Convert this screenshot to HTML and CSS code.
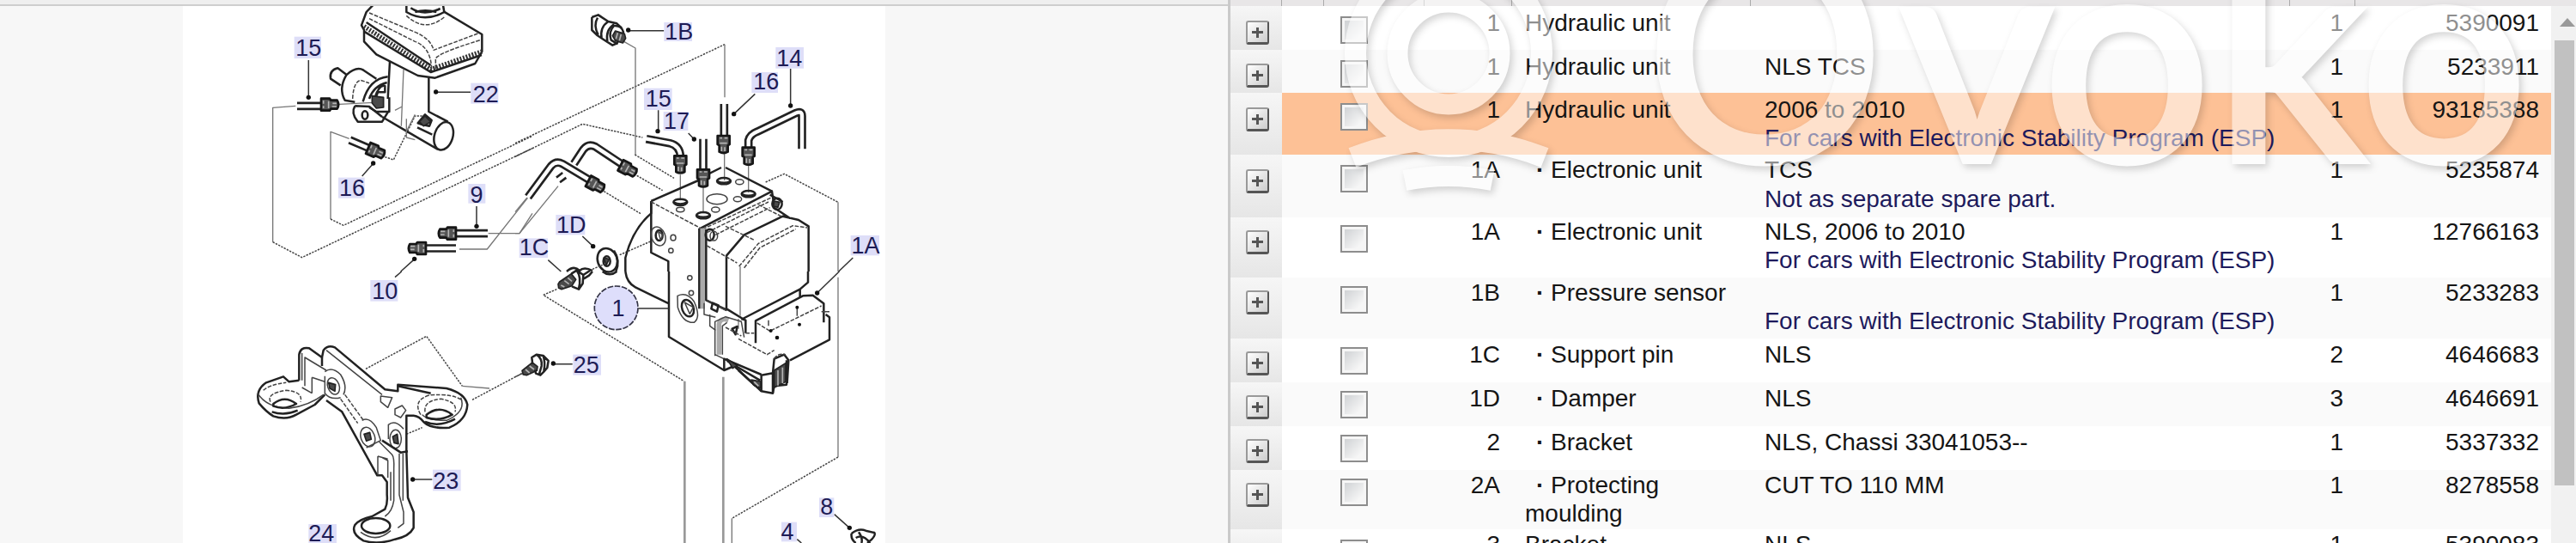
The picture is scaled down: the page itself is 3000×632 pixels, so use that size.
FILE: index.html
```html
<!DOCTYPE html>
<html lang="en">
<head>
<meta charset="utf-8">
<title>Parts catalogue</title>
<link rel="stylesheet" href="styles.css">
</head>
<body>
<main class="catalogue">
<section class="diagram">
<div class="toolbar-edge"></div>
<svg class="drawing" viewBox="213 7 818 625" width="818" height="625">
<defs>
<g id="nut"><path class="nut" d="M-21 -28H21V2L15 6V28Q0 37 -15 28V6L-21 2Z"/><path class="glint" d="M-13 -20H-5M3 -20H14M-13 -2H12M-7 10V26M4 12V26"/></g>
<g id="hole"><ellipse class="ink" rx="24" ry="11"/><path class="blk" d="M-22 0Q0 10 22 0L12 10H-12Z"/></g>
</defs>

<!-- upper left: master cylinder, reservoir and pipes -->
<g transform="translate(200 0) scale(.33333)">
<path class="thin" d="M433 370L353 376V845M620 484L555 460V765M585 364L705 358"/>
<path class="dots" d="M353 845L455 899L1260 518M555 765L600 787L1260 475M745 548L775 558L850 405H880"/>
<path class="thin" d="M1104 815H1215L1260 745M1005 870H1102L1260 670"/>
<path class="ink" d="M703 18L680 42L663 88L672 105V145L715 190L860 264L920 272L1060 222L1084 180V120L950 40"/>
<path class="ink" d="M820 18V42Q885 80 952 42L948 18M835 28Q880 58 938 30M850 42Q885 32 925 42"/>
<path class="dash" d="M820 55Q885 115 952 60M690 45L850 112Q905 135 915 175L1075 115M690 65L850 145Q905 165 908 240M922 240V205Q930 185 1078 140"/>
<path class="ribs" d="M672 92L905 242L1083 180"/>
<path class="ink" d="M680 78L905 228M672 110L905 252L1083 192"/>
<path class="ink" d="M762 215L755 345M898 272V392M735 408L815 455L930 522M898 390L965 425"/>
<path class="thin" d="M810 242L802 440M822 455L850 400M780 385L805 372M820 415V480L850 488"/>
<ellipse class="ink" cx="950" cy="475" rx="32" ry="50" transform="rotate(17 950 475)"/>
<path class="ink" d="M860 430L885 400L908 420L900 440L875 435ZM858 445L910 470"/><path class="blk" d="M865 425L885 405L905 425L880 440Z"/>
<path class="ink" d="M610 260L580 238Q550 245 555 275L590 298M610 262Q645 230 670 245L715 275M610 262Q582 310 605 350L640 356M755 268Q690 275 668 355"/>
<path class="dash" d="M632 345Q635 285 660 280L690 290"/>
<path class="ink" d="M752 288Q705 300 690 345M710 340Q725 295 745 300V322H720L710 350M760 340V390H715L690 375"/>
<path class="blk" d="M700 335L740 340V375L715 378L700 360Z"/>
<path class="ink" d="M640 370Q625 395 650 425L735 425L755 392M640 370L690 372L735 408"/><ellipse class="ink" cx="675" cy="402" rx="10" ry="14"/>
<path class="tube" d="M438 370H535M622 489L690 518M1104 815H975M993 867H870"/><path class="tubein" d="M436 370H535M620 488L690 518M1106 815H975M995 867H870"/>
<use href="#nut" transform="translate(550 365) rotate(-90)"/><use href="#nut" transform="translate(712 528) rotate(-67)"/><use href="#nut" transform="translate(965 815) rotate(90)"/><use href="#nut" transform="translate(860 867) rotate(90)"/>
<path class="lead" d="M478 210V340M1045 322H925M665 615L703 572M1065 720V788M800 948L848 905"/>
<g class="dot"><circle cx="478" cy="340" r="8"/><circle cx="923" cy="321" r="8"/><circle cx="704" cy="570" r="8"/><circle cx="1065" cy="790" r="8"/><circle cx="848" cy="904" r="8"/></g>
<g class="tag"><rect x="428" y="128" width="94" height="76"/><rect x="1045" y="290" width="96" height="72"/><rect x="582" y="620" width="92" height="72"/><rect x="1036" y="642" width="60" height="68"/></g>
<g class="num"><text x="478" y="195">15</text><text x="1097" y="356">22</text><text x="630" y="685">16</text><text x="1065" y="708">9</text></g>
</g>

<!-- upper right: hydraulic unit top with its connections -->
<g transform="translate(600 0) scale(.33333)">
<path class="dots" d="M0 500L732 155M0 547L235 433L445 480M418 540L555 622M425 613L515 665M310 668L438 746M875 636L940 607L1128 706M365 890L475 842"/>
<path class="thin" d="M380 145L420 168V540M732 155V340M1128 706V948M577 610V700M657 650V745M731 530V630M815 580V672M0 815H15L150 650M0 740L50 680"/>
<path class="ink" d="M290 52L325 75M268 60L290 52L300 58M268 60V105L285 122L312 140L340 158L358 150M325 75L355 82L372 98M288 62Q272 88 290 122M325 75Q295 95 302 135M345 85Q315 105 322 145"/>
<path class="ink" d="M345 90Q372 88 378 112L355 152L335 140Q325 112 345 90Z"/>
<path class="blk" d="M350 108L382 118L386 134L376 150L350 142L340 125Z"/><path class="glint" d="M358 115L352 136M370 120L364 142"/>
<path class="ink" d="M475 702L640 630M475 702V882L535 912V948M720 585L640 625M735 585L897 668"/>
<path class="ink" d="M648 797L897 668L905 720M475 705V745Q410 800 385 900V948"/>
<path class="dash" d="M475 705L648 797M655 800L895 690M670 812L885 705M700 820L890 725"/>
<path class="grey" d="M655 797V948"/><path class="ink" d="M643 797V948M667 800V948"/>
<use href="#hole" x="577" y="706"/><use href="#hole" x="657" y="752"/><use href="#hole" x="729" y="632"/><use href="#hole" x="815" y="677"/>
<g class="mid"><ellipse cx="705" cy="695" rx="36" ry="18"/><ellipse cx="784" cy="635" rx="14" ry="9"/><ellipse cx="777" cy="695" rx="14" ry="9"/><ellipse cx="700" cy="732" rx="14" ry="9"/><ellipse cx="577" cy="732" rx="14" ry="8"/><ellipse cx="552" cy="830" rx="9" ry="10"/><ellipse cx="544" cy="875" rx="8" ry="8"/></g>
<ellipse class="mid" cx="500" cy="825" rx="24" ry="34" transform="rotate(-20 500 825)"/><ellipse class="ink" cx="503" cy="822" rx="12" ry="18"/><path class="mid" d="M500 808L516 820L508 838Z"/>
<ellipse class="ink" cx="680" cy="820" rx="15" ry="20"/><ellipse class="mid" cx="694" cy="824" rx="13" ry="16"/>
<ellipse class="ink" cx="915" cy="712" rx="17" ry="20"/><path class="blk" d="M905 702L924 706L918 724L902 720Z"/><path class="ink" d="M890 680L935 705"/>
<path class="ink" d="M738 948V893L800 820L935 755L990 768L1025 790V948M905 725L960 762"/>
<path class="dash" d="M782 930L850 850L970 788L1020 795M670 858L775 918M735 790L835 838M850 715L935 758M800 935L855 865L980 800"/>
<path class="thin" d="M786 930V948"/>
<path class="tube" d="M458 485L540 500Q578 510 577 550M657 485V600M730 363V480M815 520V490Q820 470 845 460L980 395Q1002 385 1002 405V520M45 688L125 580Q143 560 165 572L265 632M150 628L172 612M205 572L238 522Q255 500 280 512L375 575"/>
<path class="tubein" d="M456 484L540 500Q578 510 577 550M657 482V600M730 360V480M815 520V490Q820 470 845 460L980 395Q1002 385 1002 405V523M43 691L125 580Q143 560 165 572L265 632M148 630L174 610M203 575L238 522Q255 500 280 512L375 575"/>
<use href="#nut" x="577" y="572"/><use href="#nut" x="657" y="620"/><use href="#nut" x="728" y="502"/><use href="#nut" x="815" y="543"/><use href="#nut" transform="translate(280 645) rotate(-62)"/><use href="#nut" transform="translate(393 590) rotate(-62)"/>
<ellipse class="ink" cx="322" cy="908" rx="34" ry="42" transform="rotate(-20 322 908)"/><ellipse class="ink" cx="320" cy="912" rx="12" ry="17"/><path class="blk" d="M310 900L328 905L318 926Z"/><path class="ink" d="M345 875Q368 910 352 948"/>
<path class="ink" d="M180 948Q205 925 225 945Q240 930 270 945"/><path class="dots" d="M270 940L305 925"/>
<path class="lead" d="M520 107H395M962 240V368M838 328L765 397M500 385V458M605 465L625 486M235 825L272 860M115 908L160 948M1180 900L1130 948"/>
<g class="dot"><circle cx="395" cy="105" r="8"/><circle cx="962" cy="369" r="8"/><circle cx="764" cy="398" r="8"/><circle cx="498" cy="458" r="8"/><circle cx="625" cy="486" r="8"/><circle cx="272" cy="860" r="8"/></g>
<g class="tag"><rect x="520" y="78" width="98" height="66"/><rect x="910" y="165" width="98" height="74"/><rect x="826" y="252" width="92" height="72"/><rect x="450" y="308" width="98" height="76"/><rect x="518" y="390" width="86" height="66"/><rect x="142" y="750" width="102" height="70"/><rect x="14" y="832" width="100" height="68"/><rect x="1172" y="822" width="100" height="70"/></g>
<g class="num"><text x="572" y="138">1B</text><text x="958" y="232">14</text><text x="877" y="312">16</text><text x="500" y="372">15</text><text x="564" y="450">17</text><text x="196" y="812">1D</text><text x="66" y="892">1C</text><text x="1224" y="886">1A</text></g>
</g>

<!-- lower left: mounting bracket -->
<g transform="translate(200 316) scale(.33333)">
<path class="dots" d="M678 340L890 226L1015 400M1050 448L1225 355M820 568L875 545"/><path class="thin" d="M1015 400L1110 408"/>
<path class="ink" d="M445 380V290Q450 262 480 268L525 300L530 275Q545 255 570 265L745 412L790 418V395L960 408Q1025 425 1033 465Q1030 520 970 545Q905 550 880 525Q865 505 845 503H820V625L825 790L845 840V895Q830 925 780 935Q720 955 670 940Q625 915 640 885Q655 865 700 855L745 830Q755 810 752 780V735L735 712H718L595 490L540 450"/>
<path class="ink" d="M525 300V330M790 400L905 425M445 380L410 385L390 367L330 388Q290 415 305 460Q330 490 355 505Q400 520 435 500L500 465L535 430"/>
<path class="mid" d="M465 400V300L540 345M540 275L735 430M455 405L490 425M490 370V425M490 370L535 385M300 425Q330 475 410 478Q480 468 530 430M455 285V380M1010 440Q1030 490 960 520Q890 520 875 500"/>
<path class="dash" d="M320 415Q340 395 400 388M345 455Q330 425 400 415Q460 420 450 455M870 500Q840 450 900 432Q980 425 1015 450M885 490Q880 450 940 445Q1000 455 990 490M605 430L670 520M590 445L650 530"/>
<path class="ink" d="M355 462Q395 430 435 462Q395 485 355 470ZM890 500Q935 465 980 500Q935 525 890 510ZM350 490Q395 505 440 485M885 525Q935 545 990 515"/>
<path class="mid" d="M535 350Q560 330 590 360Q615 400 600 430M535 365V425Q555 450 590 440M665 520Q690 505 715 545L730 590L680 615M757 585V535Q780 515 810 550M730 435L770 440L755 475L730 455ZM780 480L805 468L818 485L800 510L780 500Z"/>
<ellipse class="mid" cx="565" cy="400" rx="20" ry="30" transform="rotate(-20 565 400)"/><path class="blk" d="M548 388L572 395L570 418L552 408Z"/>
<ellipse class="mid" cx="685" cy="578" rx="24" ry="35" transform="rotate(-20 685 578)"/><path class="blk" d="M672 568L692 562L697 586L680 592Z"/>
<ellipse class="mid" cx="782" cy="585" rx="20" ry="32"/><path class="blk" d="M772 577L788 568L792 602L777 598Z"/><path class="ink" d="M735 590L800 632L825 628"/>
<path class="mid" d="M725 595L770 640Q778 650 776 690V800Q770 840 745 855M795 635V780L810 840V880L790 895M720 645V710M735 650L755 660V720M720 645L755 655M808 635V800M765 700V800"/>
<ellipse class="ink" cx="713" cy="888" rx="50" ry="27"/><path class="mid" d="M660 910Q715 950 765 905"/>
<path class="lead" d="M910 726H845M780 20L803 0"/><circle class="dotc" cx="842" cy="726" r="8"/>
<g class="tag"><rect x="694" y="30" width="96" height="74"/><rect x="912" y="692" width="98" height="74"/><rect x="478" y="882" width="98" height="66"/></g>
<g class="num"><text x="745" y="96">10</text><text x="958" y="760">23</text><text x="523" y="942">24</text></g>
</g>

<!-- lower right: hydraulic unit body and control module -->
<g transform="translate(600 316) scale(.33333)">
<path class="dots" d="M145 62L98 82L590 383M0 368L25 356M1128 648L757 862"/>
<path class="rule" d="M592 383V948M727 368V948"/><path class="thin" d="M1128 20V648M757 862V948"/>
<path class="ink" d="M537 0V228L730 345L765 330M385 0Q390 40 420 55L537 112"/>
<path class="grey" d="M655 0V130"/><path class="ink" d="M643 0V130M667 0V100L740 135M738 0V130L795 165M795 165L995 62V90M1023 0V38L995 62"/>
<path class="thin" d="M786 0V155M780 165V200"/>
<path class="mid" d="M567 85Q600 70 625 105Q650 160 625 178Q585 180 568 125ZM660 110V150L700 160M670 100L735 135M680 150V190L700 205"/>
<ellipse class="ink" cx="603" cy="128" rx="20" ry="30" transform="rotate(-20 603 128)"/><path class="mid" d="M592 108L622 125L610 148Z"/>
<g class="mid"><circle cx="610" cy="22" r="8"/><circle cx="615" cy="75" r="8"/></g><path class="ink" d="M690 110L710 118L705 140L685 130ZM758 200L776 192L770 220Z"/>
<path class="grey" d="M712 290V185Q715 160 745 170"/><path class="mid" d="M698 295V175L735 158L790 175L800 230M724 290V190L740 178M698 290L740 310"/>
<path class="ink" d="M790 165L805 170V215M840 250V172L1005 85L1040 83L1078 112V178M1085 150L1098 160V238L960 310M730 345V305L860 360M765 330L860 418L900 425L905 400L948 395V310"/>
<path class="dash" d="M780 235L880 290L905 275M735 195L790 225M845 180L890 208L1070 120M805 215H835"/>
<path class="ink" d="M860 420V362L900 355L905 305L940 290L955 310L950 390M900 355V425M740 312L855 380M780 345L840 400"/>
<path class="blk" d="M905 345L945 320V385L905 405ZM740 305L775 328L760 338ZM825 378L858 384V408L832 395Z"/><path class="glint" d="M918 345V398M934 335V390M835 385L850 400"/>
<path class="dash" d="M905 305Q915 285 945 290"/><path class="mid" d="M885 170V190M985 120V155M1070 140H1098"/>
<g class="dot"><circle cx="915" cy="231" r="7"/><circle cx="993" cy="185" r="6"/><circle cx="985" cy="125" r="6"/><circle cx="893" cy="207" r="6"/></g>
<path class="blk" d="M150 44L155 36L196 8L212 28L198 50L162 62L152 58Z"/><path class="glint" d="M160 48L172 54M172 32L188 44M184 22L198 34"/>
<path class="ink" d="M196 8L215 -4L238 12L236 42L222 62L198 52M215 -4Q232 20 222 60M238 12L262 -4M240 25L258 14L270 0"/>
<path class="ink" d="M305 0Q330 20 355 0"/>
<path class="blk" d="M24 346L60 318L78 332L76 346L40 362L28 360Z"/><path class="glint" d="M36 342L50 354M50 330L66 342"/>
<path class="ink" d="M60 318L58 300L75 290L98 294L116 312L112 336L100 350L88 362L72 356L70 344M75 290Q96 305 92 330L84 358M98 294Q106 318 100 348"/>
<path class="ink" d="M1175 915Q1200 895 1225 905L1255 912Q1262 925 1230 948M1175 915Q1172 935 1190 948M1200 910Q1215 930 1210 948M1190 930Q1215 915 1240 948"/>
<path class="lead" d="M430 129H537M200 323H135M1132 0L1055 75M1115 848L1168 895M985 935L1000 948"/>
<g class="dot"><circle cx="133" cy="321" r="8"/><circle cx="1055" cy="75" r="8"/><circle cx="1168" cy="895" r="8"/></g>
<circle class="picked" cx="353" cy="127" r="76"/>
<g class="tag"><rect x="202" y="290" width="98" height="72"/><rect x="1062" y="790" width="52" height="68"/><rect x="930" y="875" width="54" height="68"/></g>
<g class="num"><text x="360" y="155">1</text><text x="248" y="354">25</text><text x="1088" y="850">8</text><text x="951" y="936">4</text></g>
</g>
</svg>
</section>

<section class="parts">
<div class="head grid"><i></i><i></i><i></i><i></i><i></i><i></i><i></i></div>
<div class="body">
<div class="rows">
<div class="row grid h51"><b class="exp e17"></b><i></i><span><u class="box c12"></u></span><span class="r">1</span><span class="name">Hydraulic unit</span><span class="desc"></span><span class="r">1</span><span class="r">5390091</span></div>
<div class="row grid h50"><b class="exp e16"></b><i></i><span><u class="box c12"></u></span><span class="r">1</span><span class="name">Hydraulic unit</span><span class="desc">NLS TCS</span><span class="r">1</span><span class="r">5233911</span></div>
<div class="row grid h72 selected"><b class="exp e17"></b><i></i><span><u class="box c12"></u></span><span class="r">1</span><span class="name">Hydraulic unit</span><span class="desc">2006 to 2010<em>For cars with Electronic Stability Program (ESP)</em></span><span class="r">1</span><span class="r">93185388</span></div>
<div class="row grid h73 t2 loose"><b class="exp e17"></b><i></i><span><u class="box c12"></u></span><span class="r">1A</span><span class="name sub"><s>·</s> Electronic unit</span><span class="desc">TCS<em>Not as separate spare part.</em></span><span class="r">1</span><span class="r">5235874</span></div>
<div class="row grid h70 t0"><b class="exp e15"></b><i></i><span><u class="box c9"></u></span><span class="r">1A</span><span class="name sub"><s>·</s> Electronic unit</span><span class="desc">NLS, 2006 to 2010<em>For cars with Electronic Stability Program (ESP)</em></span><span class="r">1</span><span class="r">12766163</span></div>
<div class="row grid h71 t2"><b class="exp e15"></b><i></i><span><u class="box c10"></u></span><span class="r">1B</span><span class="name sub"><s>·</s> Pressure sensor</span><span class="desc">&nbsp;<em>For cars with Electronic Stability Program (ESP)</em></span><span class="r">1</span><span class="r">5233283</span></div>
<div class="row grid h51 t3"><b class="exp e15"></b><i></i><span><u class="box c10"></u></span><span class="r">1C</span><span class="name sub"><s>·</s> Support pin</span><span class="desc">NLS</span><span class="r">2</span><span class="r">4646683</span></div>
<div class="row grid h51 t3"><b class="exp e15"></b><i></i><span><u class="box c10"></u></span><span class="r">1D</span><span class="name sub"><s>·</s> Damper</span><span class="desc">NLS</span><span class="r">3</span><span class="r">4646691</span></div>
<div class="row grid h51 t3"><b class="exp e15"></b><i></i><span><u class="box c10"></u></span><span class="r">2</span><span class="name sub"><s>·</s> Bracket</span><span class="desc">NLS, Chassi 33041053--</span><span class="r">1</span><span class="r">5337332</span></div>
<div class="row grid h69 t2"><b class="exp e15"></b><i></i><span><u class="box c10"></u></span><span class="r">2A</span><span class="name sub"><s>·</s> Protecting<br>moulding</span><span class="desc">CUT TO 110 MM</span><span class="r">1</span><span class="r">8278558</span></div>
<div class="row grid h51 t2"><b class="exp e16"></b><i></i><span><u class="box c12"></u></span><span class="r">3</span><span class="name">Bracket</span><span class="desc">NLS</span><span class="r">1</span><span class="r">5390083</span></div>
</div>
<div class="scroll"><div class="up"></div><div class="thumb"></div></div>
</div>
</section>
</main>

<svg class="watermark" viewBox="1550 0 1450 240" width="1450" height="240">
<g class="mark">
<circle cx="1687" cy="62" r="59.5" stroke-width="24"/>
<circle cx="1687" cy="62" r="108.5" stroke-width="25"/>
<path d="M1575 183.500A305 305 0 0 1 1799 183.500" stroke-width="24"/>
<path d="M1636 210A263 263 0 0 1 1738 210" stroke-width="24"/>
<text class="word" y="187" x="1917 2213 2379 2579 2748">Ovoko</text>
</g>
</svg>
</body>
</html>
```
FILE: styles.css
```css
* { box-sizing: border-box; }
html { overflow: hidden; }
body { margin: 0; width: 3000px; height: 632px; overflow: hidden; background: #f7f7f7; font: 28px/33px "Liberation Sans", Arial, sans-serif; color: #151515; position: relative; }
.catalogue { display: flex; height: 632px; overflow: hidden; }

.diagram { width: 1430px; }
.toolbar-edge { height: 7px; background: #efefef; border-bottom: 2px solid #cecece; }
.drawing { display: block; margin-left: 213px; background: #fff; }
.drawing path, .drawing ellipse { fill: none; stroke-linejoin: round; }
.ink { stroke: #222; stroke-width: 7.500; }
.mid, .mid ellipse, .mid circle { fill: none; stroke: #444; stroke-width: 4.500; }
.thin { stroke: #777; stroke-width: 4; }
.rule { stroke: #999; stroke-width: 8; }
.grey { stroke: #aaa; stroke-width: 16; }
.dots { stroke: #444; stroke-width: 4.500; stroke-dasharray: 7 4; }
.dash { stroke: #444; stroke-width: 4.500; stroke-dasharray: 14 5; }
.ribs { stroke: #333; stroke-width: 16; stroke-dasharray: 6 5; }
.lead { stroke: #333; stroke-width: 4.500; }
.dot circle, .dotc { fill: #111; }
.tube { stroke: #222; stroke-width: 29; }
.tubein { stroke: #fff; stroke-width: 13; }
.drawing .nut { fill: #555; stroke: #161616; stroke-width: 8; }
.drawing .blk { fill: #4a4a4a; stroke: #222; stroke-width: 5; }
.glint { stroke: #b5b5b5; stroke-width: 5; }
.tag rect { fill: #dedef8; }
.picked { fill: #dedefb; stroke: #334; stroke-width: 5; stroke-dasharray: 20 5; }
.num text { font: 81px "Liberation Sans", Arial, sans-serif; fill: #1d1b55; text-anchor: middle; }

.parts { flex: 1; border-left: 3px solid #cacaca; background: #fff; }
.grid { display: grid; grid-template-columns: 60px 49px 117px 102px 278px 628px 76px 228px; }
.head { height: 7px; background: #e8e6e7; }
.head i { border-right: 1px solid #aaa; }
.body { display: flex; height: 625px; overflow: hidden; }
.rows { width: 1538px; height: 625px; overflow: hidden; }
.row { background: #fff; overflow: hidden; }
.row:nth-child(even) { background: #fafafa; }
.row.selected { background: #fdc196; }
.h50 { height: 50px; } .h51 { height: 51px; } .h69 { height: 69px; } .h70 { height: 70px; }
.h71 { height: 71px; } .h72 { height: 72px; } .h73 { height: 73px; }
.r, .name, .desc { padding-top: 3px; white-space: nowrap; }
.t0 > .r, .t0 > .name, .t0 > .desc { padding-top: 0; }
.t2 > .r, .t2 > .name, .t2 > .desc { padding-top: 1px; }
.t3 > .r, .t3 > .name, .t3 > .desc { padding-top: 2px; }
.r { text-align: right; padding-right: 14px; }
.name { padding-left: 15px; }
.sub { text-indent: 13px; }
.sub s { text-decoration: none; font-weight: bold; }
.desc { padding-left: 16px; }
.desc em { display: block; font-style: normal; color: #1d1a5c; }
.loose em { margin-top: 1px; }
.exp { background: linear-gradient(#f6f6f6, #e6e6e6); padding-left: 18px; }
.exp::before { content: ""; display: block; width: 23px; height: 23px; border: 2px solid #999; border-right-color: #555; border-bottom: 3px solid #555; border-radius: 3px;
  background: linear-gradient(#555, #555) center / 13px 3px no-repeat, linear-gradient(#555, #555) center / 3px 12px no-repeat, linear-gradient(135deg, #fff, #ccc); }
.e15 { padding-top: 15px; } .e16 { padding-top: 16px; } .e17 { padding-top: 17px; }
.box { display: block; margin-left: 19px; width: 32px; height: 32px; border: 2px solid #8d8d8d; background: linear-gradient(135deg, #c9cccf, #f6f6f6 75%); box-shadow: inset 0 0 0 3px #f6f6f6; }
.c9 { margin-top: 9px; } .c10 { margin-top: 10px; } .c12 { margin-top: 12px; }

.scroll { flex: 1; background: #f1f1f1; padding-left: 4px; }
.up { height: 40px; padding: 4px 0 0 6px; }
.up::before { content: ""; display: block; width: 0; border: 9px solid transparent; border-top-width: 12px; border-bottom: 10px solid #999; margin-top: -2px; }
.thumb { width: 23px; height: 518px; background: #c1c1c1; }

.watermark { position: absolute; left: 1550px; top: 0; }
.mark { opacity: .52; filter: drop-shadow(3px 4px 4px rgba(0, 0, 0, .32)); fill: none; stroke: #fff; }
.word { font: 400 346px Lato, sans-serif; fill: #fff; stroke: #fff; stroke-width: 8px; }
```
